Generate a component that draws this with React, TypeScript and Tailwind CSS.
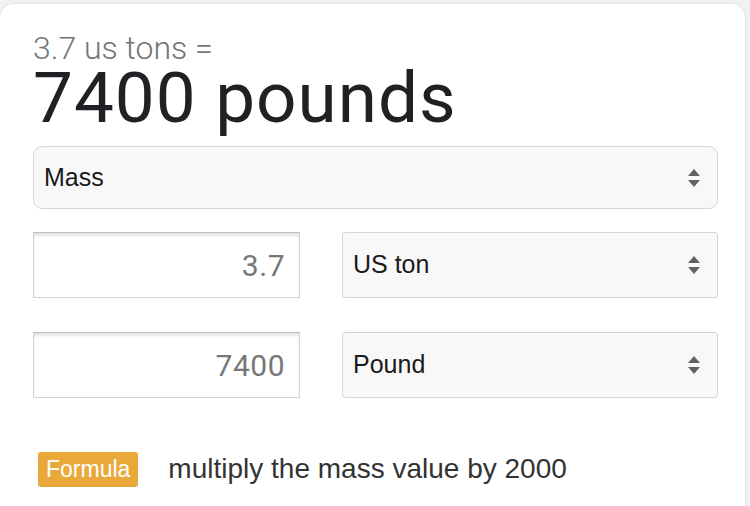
function Arrows() {
  return (
    <svg width="14" height="22" viewBox="0 0 14 22" className="shrink-0">
      <path d="M7 2 L13 9 H1 Z" fill="#5f6368" />
      <path d="M7 20 L13 13 H1 Z" fill="#5f6368" />
    </svg>
  )
}

function Select({ label, big }: { label: string; big?: boolean }) {
  return (
    <div
      className={`flex items-center justify-between bg-[#f8f8f8] border border-[#d6d6d6] pl-[10px] pr-[16px] ${
        big ? 'h-[63px] rounded-[9px]' : 'h-[66px] rounded-[3px]'
      }`}
    >
      <span className="text-[25px] text-[#1a1a1a]" style={{ fontFamily: '"Liberation Sans", Arial, sans-serif' }}>
        {label}
      </span>
      <Arrows />
    </div>
  )
}

function NumInput({ value }: { value: string }) {
  return (
    <div className="h-[66px] flex items-center justify-end pr-[14px] bg-white border border-[#d3d3d3] border-t-[#bdbdbd] shadow-[inset_0_3px_3px_rgba(0,0,0,0.10)]">
      <span className="text-[30px] tracking-[0.5px] text-[#777]" style={{ fontFamily: 'Roboto, sans-serif' }}>
        {value}
      </span>
    </div>
  )
}

export default function App() {
  return (
    <div className="w-[750px] h-[506px] bg-[#f1f1f1] pt-[4px] pr-[5px] overflow-hidden">
      <div className="h-[520px] bg-white rounded-t-[14px] shadow-[0_0_3px_rgba(0,0,0,0.12)] pl-[33px] pr-[27px]" style={{ fontFamily: 'Roboto, sans-serif' }}>
        <div className="pt-[30px] text-[32px] leading-[28px] font-light text-[#70757a]">3.7 us tons =</div>
        <div className="text-[71px] leading-[72px] tracking-[1px] text-[#202124]">7400 pounds</div>
        <div className="mt-[12px]">
          <Select label="Mass" big />
        </div>
        <div className="mt-[23px] grid grid-cols-[267px_1fr] gap-[42px]">
          <NumInput value="3.7" />
          <Select label="US ton" />
        </div>
        <div className="mt-[34px] grid grid-cols-[267px_1fr] gap-[42px]">
          <NumInput value="7400" />
          <Select label="Pound" />
        </div>
        <div className="mt-[50px] flex items-center pl-[5px]" style={{ fontFamily: '"Liberation Sans", Arial, sans-serif' }}>
          <span className="bg-[#e9a93a] text-white text-[23px] leading-[35px] px-[8px] rounded-[3px]">Formula</span>
          <span className="ml-[30px] text-[28px] text-[#333]">multiply the mass value by 2000</span>
        </div>
      </div>
    </div>
  )
}
